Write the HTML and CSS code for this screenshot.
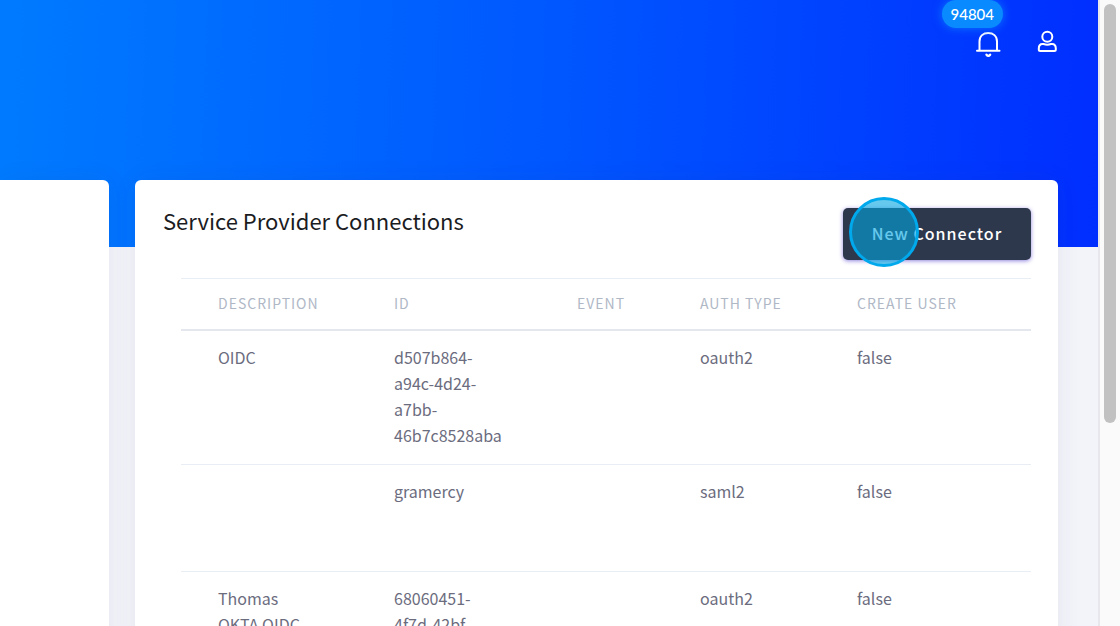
FILE: index.html
```html
<!DOCTYPE html>
<html lang="en">
<head>
  <meta charset="utf-8">
  <title>Service Provider Connections</title>
  <link rel="stylesheet" href="styles.css">
</head>
<body>
  <div class="page">
    <header class="topbar">
      <button class="icon-button" aria-label="Notifications">
        <svg class="bell" width="26" height="28" viewBox="0 0 26 28" fill="none" stroke="#fff" stroke-width="2" stroke-linecap="round">
          <path d="M2 20.800H24.500M4.500 20.500V11.500C4.500 6 8.300 3 13.200 3S22 6 22 11.500V20.500"/>
          <path d="M11.500 24.800Q13.300 27 15.100 24.800" stroke-width="2.400"/>
        </svg>
        <span class="badge">94804</span>
      </button>
      <button class="icon-button" aria-label="Account">
        <svg class="user" width="20" height="24" viewBox="0 0 20 24" fill="none" stroke="#fff" stroke-width="2" stroke-linejoin="round">
          <circle cx="10.300" cy="6.800" r="5"/>
          <path d="M5.500 14H6.500Q10.300 15.500 14 14H15C17.500 14 18.800 16 18.800 18.500V19.500Q18.800 21 17.300 21H3.300Q1.800 21 1.800 19.500V18.500C1.800 16 3 14 5.500 14Z"/>
        </svg>
      </button>
    </header>

    <main class="content">
      <section class="card side-card"></section>

      <section class="card main-card">
        <div class="card-header">
          <h1>Service Provider Connections</h1>
          <div class="action">
            <button class="new-button">New Connector</button>
            <span class="click-marker"></span>
          </div>
        </div>

        <table class="connections">
          <thead>
            <tr>
              <th class="description">Description</th>
              <th class="id">ID</th>
              <th class="event">Event</th>
              <th class="auth">Auth Type</th>
              <th>Create User</th>
            </tr>
          </thead>
          <tbody>
            <tr>
              <td class="description">OIDC</td>
              <td class="id">d507b864-a94c-4d24-a7bb-46b7c8528aba</td>
              <td></td>
              <td>oauth2</td>
              <td>false</td>
            </tr>
            <tr>
              <td class="description"></td>
              <td class="id">gramercy</td>
              <td></td>
              <td>saml2</td>
              <td>false</td>
            </tr>
            <tr>
              <td class="description">Thomas OKTA OIDC</td>
              <td class="id">68060451-4f7d-42bf</td>
              <td></td>
              <td>oauth2</td>
              <td>false</td>
            </tr>
          </tbody>
        </table>
      </section>
    </main>
  </div>

  <!-- scroll track -->
  <div class="scroll-track">
    <div class="scroll-thumb"></div>
  </div>
</body>
</html>
```

FILE: styles.css
```css
* {
  box-sizing: border-box;
}

body {
  margin: 0;
  height: 100vh;
  display: flex;
  overflow: hidden;
  font-family: "Noto Sans CJK SC", "Noto Sans", sans-serif;
  color: #6b6c7e;
}

.page {
  flex: 1;
  display: flex;
  flex-direction: column;
  background: linear-gradient(92deg, #007bff 0%, #0057ff 50%, #002eff 100%) no-repeat #f3f4fa;
  background-size: 100% 247px;
}

.topbar {
  height: 180px;
  flex-shrink: 0;
  display: flex;
  justify-content: flex-end;
  align-items: flex-start;
  gap: 36px;
  padding: 30px 41px 0 0;
}

.icon-button {
  position: relative;
  padding: 0;
  border: none;
  background: none;
  cursor: pointer;
}

.icon-button svg {
  display: block;
}

.badge {
  position: absolute;
  right: -2px;
  bottom: 30px;
  padding: 0 9px;
  border-radius: 14px;
  background-color: #0a8aff;
  box-shadow: 0 0 10px #0a7aff;
  color: #fff;
  font-family: Lato, sans-serif;
  font-size: 15px;
  font-weight: 500;
  line-height: 28px;
}

.content {
  flex: 1;
  display: flex;
  gap: 26px;
  padding-right: 40px;
}

.card {
  background-color: #fff;
  border-radius: 6px;
  box-shadow: 0 0 24px rgba(60, 60, 90, 0.07);
}

.side-card {
  width: 109px;
  border-top-left-radius: 0;
}

.main-card {
  flex: 1;
  padding: 28px 27px 0 28px;
}

.card-header {
  display: flex;
  justify-content: space-between;
  align-items: flex-start;
  height: 70px;
}

h1 {
  margin: 0;
  color: #1b1c1f;
  font-size: 22px;
  font-weight: 400;
  line-height: 24px;
}

.action {
  position: relative;
}

.new-button {
  width: 188px;
  height: 52px;
  padding: 0 0 2px;
  border: none;
  border-radius: 5px;
  background-color: #2e384d;
  box-shadow: 0 1px 4px rgba(70, 50, 200, 0.6);
  color: #fff;
  font-family: inherit;
  font-size: 16px;
  font-weight: 500;
  letter-spacing: 1px;
  cursor: pointer;
}

/* highlight ring over the button */
.click-marker {
  position: absolute;
  top: -11px;
  left: 6px;
  width: 70px;
  height: 70px;
  border: 3px solid #00a8ec;
  border-radius: 50%;
  background-color: rgba(0, 165, 225, 0.6);
  pointer-events: none;
}

.connections {
  width: calc(100% - 18px);
  margin-left: 18px;
  table-layout: fixed;
  border-spacing: 0;
  border-top: 1px solid #e9eef4;
}

.connections th {
  height: 52px;
  padding: 0 0 2px;
  border-bottom: 2px solid #e4e8ee;
  color: #b0b8c6;
  font-size: 14px;
  font-weight: 400;
  letter-spacing: 1px;
  text-align: left;
  text-transform: uppercase;
  white-space: nowrap;
}

.connections td {
  height: 107px;
  padding: 13px 0 16px;
  border-bottom: 1px solid #e9eef4;
  font-size: 16px;
  line-height: 26px;
  vertical-align: top;
}

.connections .description {
  width: 213px;
  padding-left: 37px;
  padding-right: 80px;
}

.connections .id {
  width: 183px;
  padding-right: 72px;
}

.connections .event {
  width: 123px;
}

.connections .auth {
  width: 157px;
}

.scroll-track {
  width: 22px;
  padding: 4px;
  border-left: 2px solid #e8e8ec;
  background-color: #fafafa;
}

.scroll-thumb {
  width: 12px;
  height: 67vh;
  border-radius: 6px;
  background-color: #c1c1c1;
}
```
